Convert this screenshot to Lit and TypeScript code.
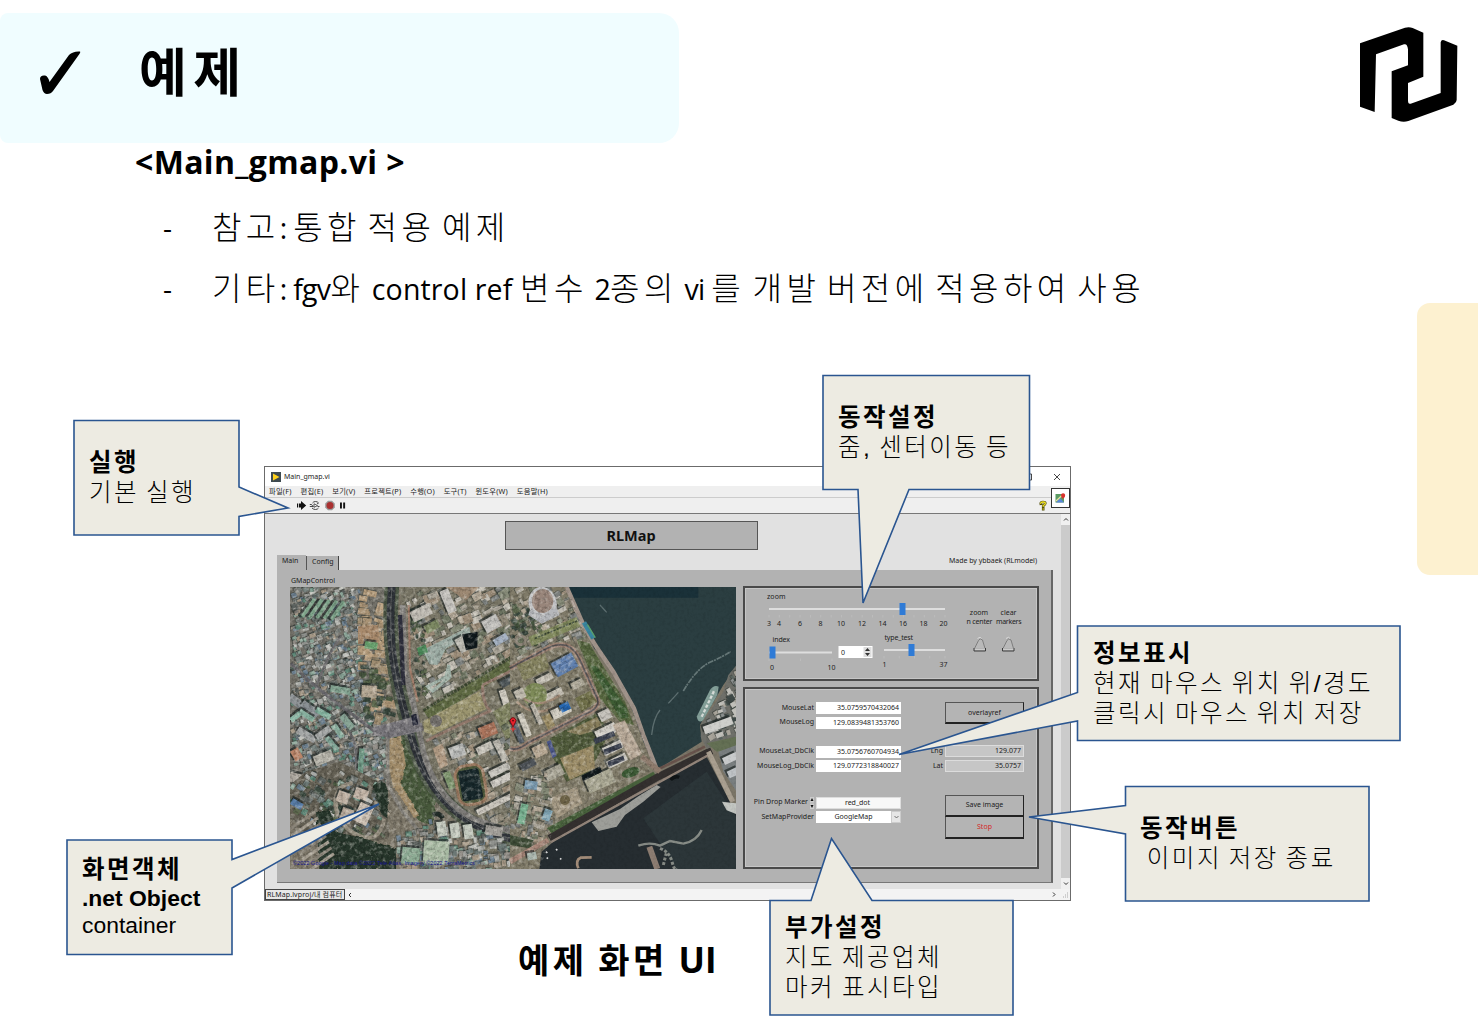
import { LitElement, html, svg, css } from "lit";
import { customElement } from "lit/decorators.js";

/* ---------- deterministic scatter used by the aerial map ---------- */
function rng(seed: number) {
  let s = seed;
  return () => {
    s = (s * 1664525 + 1013904223) % 4294967296;
    return s / 4294967296;
  };
}

type Pt = [number, number];

function inside(p: Pt, poly: Pt[]) {
  let hit = false;
  for (let i = 0, j = poly.length - 1; i < poly.length; j = i++) {
    const [xi, yi] = poly[i];
    const [xj, yj] = poly[j];
    if (yi > p[1] !== yj > p[1] && p[0] < ((xj - xi) * (p[1] - yi)) / (yj - yi) + xi) hit = !hit;
  }
  return hit;
}

function scatter(seed: number, poly: Pt[], count: number, min: number, max: number, angle: number, colors: string[]) {
  const r = rng(seed);
  const xs = poly.map((p) => p[0]);
  const ys = poly.map((p) => p[1]);
  const x0 = Math.min(...xs), x1 = Math.max(...xs), y0 = Math.min(...ys), y1 = Math.max(...ys);
  const out = [];
  for (let i = 0; i < count; i++) {
    const x = x0 + r() * (x1 - x0);
    const y = y0 + r() * (y1 - y0);
    const w = min + r() * (max - min);
    const h = min + r() * (max - min) * 0.7;
    const a = angle + (r() - 0.5) * 16;
    const c = colors[Math.floor(r() * colors.length)];
    if (!inside([x, y], poly)) continue;
    out.push(svg`<g transform="translate(${x.toFixed(1)} ${y.toFixed(1)}) rotate(${a.toFixed(0)})"><rect x="-2" y="-3" width=${w.toFixed(1)} height=${h.toFixed(1)} fill="#2c332f" opacity=".5"></rect><rect width=${w.toFixed(1)} height=${h.toFixed(1)} fill=${c}></rect></g>`);
  }
  return out;
}

const HOUSES = ["#8f918d", "#a7a9a5", "#7a807d", "#8aa497", "#6c7875", "#a39684", "#bfc0bb", "#6d8090", "#8f8b85", "#5f8878", "#5b615e"];
const CAMPUS = ["#a9a498", "#c2beb4", "#8f8878", "#858a77", "#9c8d79", "#7c807e", "#b3a897", "#6c7360"];
const TREES = ["#46553f", "#505f45", "#3f4d43", "#5f6b50", "#37453b"];
const SAND = ["#b39b7b", "#a89274", "#bda586", "#a08e72"];

const slab = (x: number, y: number, w: number, h: number, a: number, c: string) =>
  svg`<g transform="translate(${x} ${y}) rotate(${a})"><rect x="-5" y="-7" width=${w} height=${h} fill="#1f2625" opacity=".7"></rect><rect width=${w} height=${h} fill=${c}></rect></g>`;

@customElement("aerial-map")
class AerialMap extends LitElement {
  static styles = css`
    :host { display: block; width: 446px; height: 282px; }
    .pic { display: block; width: 446px; height: 282px; }
    .credit { font: 5.4px "Liberation Sans", sans-serif; fill: #14148c; }
  `;
  render() {
    return html`<svg class="pic" viewBox="290 586 446 282">
      <defs>
        <filter id="grain" x="0" y="0" width="1" height="1">
          <feTurbulence type="fractalNoise" baseFrequency="0.32" numOctaves="3" seed="4"></feTurbulence>
          <feColorMatrix values="0 0 0 0 0  0 0 0 0 0  0 0 0 0 0  2.6 0 0 0 -1.15"></feColorMatrix>
        </filter>
        <filter id="glow" x="0" y="0" width="1" height="1">
          <feTurbulence type="fractalNoise" baseFrequency="0.22" numOctaves="3" seed="11"></feTurbulence>
          <feColorMatrix values="0 0 0 0 1  0 0 0 0 .97  0 0 0 0 .9  0 2.4 0 0 -1.15"></feColorMatrix>
        </filter>
        <filter id="rough" x="-.1" y="-.1" width="1.2" height="1.2">
          <feTurbulence type="fractalNoise" baseFrequency="0.06" numOctaves="3" seed="2"></feTurbulence>
          <feDisplacementMap in="SourceGraphic" scale="9" xChannelSelector="R" yChannelSelector="G"></feDisplacementMap>
        </filter>
      </defs>
      <rect x="290" y="586" width="446" height="282" fill="#7c7668"></rect>

      <g transform="translate(286 584) scale(.33333)">
        <path d="M12 6H300V600H12Z" fill="#737169"></path>
        ${scatter(7, [[12, 6], [215, 6], [215, 210], [225, 330], [290, 410], [300, 590], [200, 600], [12, 560]], 1150, 7, 20, -22, HOUSES)}
        ${scatter(21, [[215, 6], [290, 6], [305, 380], [260, 400], [215, 230]], 70, 10, 40, 8, SAND)}
        ${scatter(22, [[215, 240], [300, 240], [310, 400], [240, 390]], 40, 10, 26, 8, TREES)}
        <path d="M216 122l60-2 6 52-66 6Z" fill="#a88a6c"></path>
        ${slab(238, 168, 38, 22, 8, "#66a06c")}
        ${slab(228, 300, 46, 36, 4, "#b4a793")}
        ${[0, 1, 2, 3, 4].map((i) => slab(44 + i * 22, 92 + i * 2, 66, 11, -55, "#7fa58b"))}
        <path d="M14 235L60 280 140 345 215 400 275 445" fill="none" stroke="#67666a" stroke-width="10"></path>
        <path d="M165 150L130 210 92 300M190 440q30 50 18 130" fill="none" stroke="#6d6c6e" stroke-width="8"></path>
        ${slab(18, 325, 60, 24, 38, "#8d9295")}
        ${slab(55, 345, 60, 24, 36, "#898f93")}
        ${slab(10, 400, 50, 16, -38, "#8bb7a5")}
        ${slab(45, 372, 50, 16, 32, "#84ad9c")}
        ${slab(40, 425, 62, 22, 30, "#a2a5a5")}
        ${slab(86, 450, 50, 20, -36, "#a6a9a8")}
        ${slab(95, 365, 48, 18, 30, "#7fae9b")}
        ${slab(135, 300, 60, 20, 10, "#7fa08e")}
        ${slab(150, 415, 46, 16, 55, "#8cb0a0")}
        ${slab(128, 452, 50, 16, 50, "#7fa596")}
        ${slab(80, 515, 58, 32, -22, "#b5b3a9")}
        ${slab(175, 385, 50, 20, 50, "#89a596")}
        ${slab(220, 490, 16, 80, 4, "#6f9a86")}
        ${slab(14, 560, 40, 30, 15, "#aaa59d")}
        ${slab(12, 500, 26, 34, -30, "#b98468")}
        <path d="M60 560L160 530 300 600 310 760 120 800 12 700V600Z" fill="#635f53"></path>
        ${scatter(31, [[60, 560], [150, 540], [300, 600], [300, 740], [120, 760], [12, 690], [12, 600]], 150, 8, 24, 30, [...TREES, ...HOUSES])}
        <path d="M148 650Q150 600 200 595M148 650Q150 720 215 750T295 700" fill="none" stroke="#958e7f" stroke-width="12"></path>
        ${slab(160, 615, 36, 34, 20, "#bcaea0")}
        ${slab(212, 605, 40, 34, 20, "#c1b3a5")}
        ${slab(172, 665, 36, 44, 20, "#b8aa9c")}
        ${slab(225, 650, 44, 60, 25, "#cbbfb2")}
        ${slab(22, 640, 36, 20, 30, "#587ca6")}
        <g filter="url(#rough)">
          <path d="M262 600Q300 580 306 610L304 700Q280 690 275 650Z" fill="#26362b"></path>
          <path d="M90 680L130 670 150 740 250 765 330 790V852H100Z" fill="#273629"></path>
        </g>
        ${[0, 1, 2, 3, 4, 5, 6, 7].map((i) => svg`<path d="M${8 + i * 8} ${735 + i * 18}L${88 + i * 8} ${680 + i * 18}" stroke=${i % 2 ? "#a29b8e" : "#8a8478"} stroke-width="9"></path>`)}

        <path d="M340 0L370 6 690 0V900H640L430 560 390 410Z" fill="#787565"></path>
        ${scatter(41, [[350, 6], [690, 6], [690, 200], [430, 340], [385, 320]], 250, 10, 36, -28, CAMPUS)}
        ${scatter(42, [[370, 60], [400, 60], [430, 340], [390, 330]], 60, 6, 16, 10, TREES)}
        ${slab(370, 82, 62, 34, -26, "#bdb9b1")}
        ${slab(460, 20, 28, 72, -22, "#c4c2bd")}
        <path d="M480 6H580L540 46Z" fill="#9c8872"></path>
        ${slab(412, 124, 46, 26, -28, "#7d8a63")}
        ${slab(585, 110, 50, 40, -28, "#c1c0bd")}
        ${slab(620, 165, 44, 22, -30, "#a6b3c4")}
        <path d="M410 195L500 150 550 125 555 150 480 190 455 240 430 238Z" fill="#9dada5"></path>
        <path d="M392 190l26-12 8 24-26 10Z" fill="#4c8a5a"></path>
        ${slab(505, 165, 30, 46, -28, "#b8b7af")}
        <path d="M528 148L575 140 574 188 540 196Z" fill="#10191c"></path>
        <path d="M425 305L480 275 488 240 492 276 440 318Z" stroke="#a3b4aa" stroke-width="9" fill="none"></path>
        <path d="M412 378L690 212V250L430 402Z" fill="#5f6a43"></path>
        <path d="M412 376L690 208" stroke="#3f4a33" stroke-width="9" stroke-dasharray="9 3"></path>
        <path d="M412 408L580 318 600 372 440 450 414 440Z" fill="#9a946e"></path>
        <circle cx="450" cy="408" r="18" fill="#6d6a66"></circle>
        <path d="M590 300L690 250M590 300Q588 350 612 378L520 420 420 468" fill="none" stroke="#90776a" stroke-width="9"></path>
        ${slab(640, 290, 50, 22, -28, "#4f575a")}
        ${slab(638, 318, 20, 52, -18, "#cfcbc0")}
        <path d="M620 380L690 340V460L660 460Z" fill="#7f8360"></path>

        ${scatter(51, [[430, 470], [640, 390], [690, 500], [690, 780], [640, 740], [520, 640]], 200, 10, 30, -26, CAMPUS)}
        <path d="M440 490L470 475 486 540 462 552Z" fill="#b09a83"></path>
        ${slab(486, 490, 46, 36, -20, "#b8bab8")}
        ${slab(575, 430, 52, 36, -22, "#ab745c")}
        ${slab(568, 490, 66, 24, -26, "#c6c3ba")}
        ${slab(620, 470, 20, 70, -26, "#bfbcb3")}
        ${slab(606, 560, 66, 22, -26, "#c5c3bc")}
        ${slab(612, 590, 72, 22, -26, "#cbc8c1")}
        ${slab(570, 675, 130, 18, -26, "#c8c4bb")}
        ${slab(470, 565, 22, 54, -22, "#7c946c")}
        <g transform="rotate(-10 556 600)">
          <rect x="508" y="536" width="94" height="126" rx="34" fill="#9c7b62"></rect>
          <rect x="517" y="545" width="76" height="108" rx="24" fill="#4f5a3c"></rect>
          <rect x="523" y="553" width="62" height="92" rx="8" fill="#17272a"></rect>
        </g>

        <g filter="url(#rough)">
          <path d="M312 450L350 440 410 560 450 640 440 720 400 710 330 600 306 530Z" fill="#46583a"></path>
          <path d="M310 460L345 452 360 540 345 600 400 690 385 700 320 600 306 530Z" fill="#a18c6b"></path>
        </g>
        <path d="M305 440V600L350 680 400 740" fill="none" stroke="#85827b" stroke-width="11"></path>
        <path d="M318 0Q306 150 328 260T372 440Q410 590 500 670T700 765" fill="none" stroke="#4d5847" stroke-width="44"></path>
        <path d="M318 0Q306 150 328 260T372 440Q410 590 500 670T700 765" fill="none" stroke="#30343a" stroke-width="23"></path>
        <path d="M318 0Q306 150 328 260T372 440Q410 590 500 670T700 765" fill="none" stroke="#5d6061" stroke-width="3"></path>
        <path d="M350 60L356 250 385 370 412 500Q450 640 560 700L690 745" fill="none" stroke="#7d7b78" stroke-width="17"></path>
        <path d="M342 90L352 300" stroke="#2e2f3c" stroke-width="13"></path>
        <path d="M368 60L372 250 395 350" stroke="#a07c6a" stroke-width="6" fill="none"></path>
        <path d="M262 440L400 402M300 450L410 425M262 440L310 445" stroke="#77757a" stroke-width="24" fill="none"></path>
        <path d="M375 390l16-4 6 32-16 4Z" fill="#1f2233"></path>
        ${scatter(61, [[330, 750], [420, 700], [600, 740], [690, 790], [690, 852], [330, 852]], 240, 9, 26, -8, HOUSES)}
        ${[0, 1, 2].map((i) => slab(450 + i * 40, 712 + i * 4, 28, 44, -8, "#c3c9be"))}
        ${slab(415, 765, 76, 70, 4, "#a9bba4")}
        ${slab(350, 785, 54, 50, 6, "#8dab94")}
        ${slab(600, 720, 52, 28, 8, "#a19e98")}
        <path d="M440 690q20-10 30 10" stroke="#222c28" stroke-width="14" fill="none"></path>
      </g>

      <g transform="translate(510 584) scale(.33333)">
        <path d="M0 6H170L250 190 370 380 440 550 120 770 90 800V852H0Z" fill="#7f7a68"></path>
        ${scatter(71, [[0, 6], [165, 6], [220, 150], [90, 190], [0, 240]], 120, 8, 30, -26, CAMPUS)}
        ${scatter(72, [[0, 60], [50, 60], [100, 150], [60, 180], [0, 190]], 50, 8, 18, -26, TREES)}
        <ellipse cx="98" cy="55" rx="42" ry="50" transform="rotate(-14 98 55)" fill="#c4c5c7"></ellipse>
        <ellipse cx="98" cy="48" rx="32" ry="36" fill="#98857a"></ellipse>
        <path d="M55 90l40 26 54-26-10-24-46 24-34-14Z" fill="#b5b7bb"></path>
        <circle cx="32" cy="166" r="18" fill="#8e8679"></circle><circle cx="32" cy="166" r="9" fill="#68705a"></circle>
        <path d="M60 170L205 110" stroke="#818a5d" stroke-width="30"></path>
        <path d="M75 160L205 106" stroke="#3d4a35" stroke-width="5" stroke-dasharray="7 3"></path>
        <path d="M0 250L100 196Q180 150 212 230L262 340Q270 370 230 385L60 470Q20 500 0 490" fill="none" stroke="#9b8273" stroke-width="15"></path>
        <path d="M0 250L100 196Q180 150 212 230L262 340Q270 370 230 385L60 470Q20 500 0 490" fill="none" stroke="#5a5658" stroke-width="5"></path>
        <path d="M200 165L238 175 290 260 345 350 372 420 330 410 270 340 232 240Z" fill="#56663f"></path>
        <path d="M240 240L262 245 350 370 355 400 330 400Z" fill="#3d5c33"></path>
        <path d="M20 240L105 205 118 250 40 288Z" fill="#84825f"></path>
        ${slab(122, 236, 70, 46, -28, "#5f7fae")}
        <path d="M122 236l62-33M128 246l62-33M133 256l62-33" stroke="#86a0c6" stroke-width="2"></path>
        ${slab(76, 284, 52, 20, -26, "#c0bbb0")}
        ${slab(98, 332, 60, 24, -26, "#c2bdb1")}
        <circle cx="75" cy="330" r="36" fill="#7d8a58"></circle>
        <path d="M30 330Q80 380 150 330M20 350Q80 410 160 350" stroke="#a48d78" stroke-width="7" fill="none"></path>
        ${slab(120, 378, 60, 30, -26, "#cfcbbf")}
        ${slab(146, 362, 30, 24, -26, "#2566b0")}
        ${slab(180, 296, 40, 22, -26, "#b0ab9b")}
        <path d="M195 340L240 318 262 350 215 380Z" fill="#6f6f49"></path>
        ${slab(22, 390, 18, 72, -22, "#d0ccc0")}
        ${slab(60, 360, 14, 66, -24, "#beb9ad")}
        ${slab(2, 410, 16, 72, -22, "#5b646e")}
        ${slab(10, 320, 30, 30, -26, "#bcb7aa")}
        <path d="M95 395l24-10 16 36-20 14Z" fill="#9a8b63"></path>

        <path d="M120 460L260 385 300 440 240 560 170 590 130 520Z" fill="#4f5a3a"></path>
        <path d="M170 440L262 395 280 430 210 450Z" fill="#877d5b"></path>
        <path d="M150 520L250 480 255 550 180 585Z" fill="#9a8b66"></path>
        ${slab(252, 440, 66, 30, -26, "#d0cdc6")}
        ${slab(276, 490, 62, 26, -26, "#cbc8c1")}
        ${slab(288, 530, 62, 24, -26, "#cbc8c1")}
        <path d="M308 420l36-14 52 100-34 20Z" fill="#b9aa99"></path>
        <path d="M250 462l60-24 6 14-60 26ZM280 494l52-20 4 14-52 22ZM292 530l48-18 4 14-48 20Z" fill="#3c4250"></path>
        ${slab(262, 385, 36, 30, -26, "#c6c3bc")}
        <ellipse cx="362" cy="562" rx="28" ry="14" transform="rotate(-18 362 562)" fill="#3c5a35"></ellipse>
        <path d="M110 470l12-6 18 48-12 8Z" fill="#4b5688"></path>
        ${slab(222, 585, 86, 44, -24, "#aaa894")}
        <path d="M214 572l56-28 6 16-56 28Z" fill="#121a1d"></path>
        <path d="M120 640L200 605 218 655 140 700Z" fill="#a59a85"></path>
        <circle cx="165" cy="645" r="15" fill="#6c6246"></circle>
        ${slab(28, 540, 48, 22, -26, "#50555a")}
        ${slab(64, 490, 40, 34, -26, "#b7a893")}
        ${slab(100, 560, 56, 34, -26, "#a8a596")}
        ${scatter(81, [[0, 570], [110, 560], [120, 740], [60, 790], [0, 740]], 90, 10, 28, 12, CAMPUS)}
        ${slab(46, 585, 38, 26, 8, "#7d9db2")}
        ${slab(34, 655, 22, 60, 12, "#76b08f")}
        ${slab(106, 670, 24, 34, 20, "#7fa4b4")}
        <path d="M0 750L70 765 60 790 0 780Z" fill="#3e4c37"></path>
        <path d="M0 830L115 765" stroke="#a8887a" stroke-width="16"></path>
        ${slab(50, 805, 28, 22, -10, "#a9b6ae")}

        <path d="M172 6H680V245L640 300 570 420 575 470 440 555 400 470 365 370 300 240 252 190 228 130Z" fill="#2b3e41"></path>
        <path d="M172 6H565V38H185Z" fill="#1a3139"></path>
        <path d="M170 6L225 130 262 190 310 260 372 370 400 450 440 552" fill="none" stroke="#a0938a" stroke-width="13"></path>
        <path d="M222 112L250 160" stroke="#3a86a0" stroke-width="14"></path>
        <path d="M232 118L256 158" stroke="#5ba06b" stroke-width="4"></path>
        <path d="M95 800L130 770 440 592 590 515 680 690V852H88Z" fill="#262d31"></path>
        <path d="M400 700Q480 640 590 560L680 700V852H500Z" fill="#2f3b3d" opacity=".7"></path>
        <path d="M110 730L430 560 440 575 125 745Z" fill="#48613c"></path>
        <path d="M118 760L445 575 605 497" fill="none" stroke="#34302f" stroke-width="22"></path>
        <path d="M122 772L450 590 600 508" fill="none" stroke="#93857a" stroke-width="7"></path>
        <path d="M440 555L585 485" fill="none" stroke="#69544d" stroke-width="8"></path>
        <path d="M395 515L450 560" stroke="#8f7c6e" stroke-width="16"></path>
        <path d="M245 712L330 672 385 634 440 600 452 606 400 650 345 690 320 725 265 738Z" fill="#b3b3ac" opacity=".85"></path>
        <g fill="none" stroke="#a7aaa2" opacity=".75">
          <path d="M385 782Q420 770 450 782L480 768 520 776Q560 768 575 735" stroke-width="7"></path>
          <path d="M450 790Q478 800 486 830T500 850M460 840l10-40" stroke-width="9" stroke-dasharray="9 5"></path>
        </g>
        <path d="M636 650L680 655V688L650 676Z" fill="#c3c6c2"></path>
        <path d="M520 318Q560 250 600 232T662 200" fill="none" stroke="#8fa09f" stroke-width="5" stroke-dasharray="17 2 6 3" opacity=".6"></path>
        <path d="M425 450Q430 400 450 375M475 355L505 322M270 60l20 22" fill="none" stroke="#8fa09f" stroke-width="4" opacity=".5"></path>
        <path d="M680 240L655 270 640 320 575 415 572 455 590 492 680 458Z" fill="#6f706a"></path>
        ${scatter(91, [[680, 245], [655, 275], [640, 330], [580, 420], [575, 460], [680, 450]], 130, 8, 26, -26, ["#c1c0ba", "#8b8f8e", "#5b6560", "#a8a49a", "#3f4947"])}
        ${slab(578, 425, 90, 24, -20, "#cfcfcb")}
        <path d="M560 395L600 315Q612 298 626 305L622 330 580 405Q566 418 560 395Z" fill="#84a099"></path>
        <path d="M575 395L612 318" stroke="#d6dcd8" stroke-width="7" stroke-dasharray="10 5"></path>
        <path d="M590 475L680 455V490L620 500Z" fill="#647054"></path>
        <path d="M625 500L680 480V620L640 560Z" fill="#7a7f80"></path>
        ${slab(636, 520, 46, 22, -25, "#c9cbcc")}
        ${slab(650, 560, 36, 22, -25, "#bfc3c6")}
        <path d="M595 500L668 650" stroke="#aaa091" stroke-width="15"></path>
        <path d="M418 785L442 852" stroke="#8d7d72" stroke-width="18"></path>
        <path d="M245 817L212 818Q195 825 205 850" fill="none" stroke="#a28c79" stroke-width="8"></path>
        <path d="M108 800l4 4M138 792l4 4M150 820l4 3M110 818l4 3" stroke="#ddd" stroke-width="5"></path>
        <path d="M482 585q12-14 26-8" stroke="#0f1416" stroke-width="10" fill="none"></path>
      </g>

      <clipPath id="land"><path d="M290 586H567L593 648 634 712 655 768 552 832 540 868H290Z"></path></clipPath>
      <rect x="290" y="586" width="446" height="282" filter="url(#grain)" opacity=".08"></rect>
      <g clip-path="url(#land)">
        <rect x="290" y="586" width="446" height="282" filter="url(#grain)" opacity=".18"></rect>
        <rect x="290" y="586" width="446" height="282" filter="url(#glow)" opacity=".4"></rect>
      </g>

      <path d="M513 726L510.600 721.500A3 3 0 1 1 515.400 721.500Z" fill="#e8202c" stroke="#58060b" stroke-width=".8"></path>
      <circle cx="513" cy="719.600" r=".9" fill="#58060b"></circle>
      <path d="M510.500 728h5M513 725.500v5" stroke="#ff2b2b" stroke-width=".9"></path>
      <text class="credit" x="293" y="864" textLength="182">©2022 Google - Map data ©2022 Tele Atlas, Imagery ©2022 TerraMetrics</text>
    </svg>`;
  }
}

/* ---------- front panel window ---------- */
@customElement("panel-window")
class PanelWindow extends LitElement {
  static styles = css`
    :host { display: block; }
    * { box-sizing: border-box; }
    .win { width: 807px; height: 435px; display: flex; flex-direction: column; background: #e1e1e1; border: 1px solid #6b6b6b;
      font: 7px/10px "Noto Sans", "Noto Sans CJK KR", sans-serif; color: #1c1c1c; }
    .title { height: 19px; flex: none; background: #fff; display: flex; align-items: center; padding: 0 9px 0 6px; }
    .title .name { margin-left: 3px; flex: 1; font-size: 7px; }
    .ic { display: block; flex: none; }
    .bars { display: flex; height: 28px; flex: none; background: #efefef; border-bottom: 1px solid #777; }
    .stack { flex: 1; display: flex; flex-direction: column; }
    .menu { height: 12px; display: flex; align-items: center; gap: 8.9px; padding: 0 0 1px 4px; border-bottom: 1px solid #ccc; font-size: 7.300px; letter-spacing: .200px; white-space: nowrap; }
    .tools { flex: 1; display: flex; align-items: center; padding: 0 4px 0 32px; }
    .vi { width: 19px; height: 20px; margin-top: 2px; border: 1px solid #333; background: #fff; display: flex; align-items: center; justify-content: center; }
    .mid { flex: 1; display: flex; min-height: 0; }
    .body { flex: 1; display: flex; flex-direction: column; padding: 7px 8px 0 12px; }
    .head { align-self: center; width: 253px; height: 29px; margin-left: -68px; border: 1px solid #555; background: #b2b2b2; display: flex; align-items: center; justify-content: center; font: bold 14.500px/18px "Noto Sans", sans-serif; color: #111; padding-bottom: 2px; }
    .tabrow { display: flex; height: 20px; align-items: flex-end; padding-top: 4px; }
    .tab { height: 14px; padding: 1px 5px 0; background: #b2b2b2; }
    .tab.first { width: 29px; height: 15px; }
    .tab.second { width: 33px; border-right: 1px solid #444; border-left: 1px solid #555; padding-left: 5px; }
    .made { margin-left: auto; padding: 0 16px 3px 0; align-self: center; letter-spacing: -.02px; }
    .page { width: 776px; height: 313px; background: #b2b2b2; border-right: 2px solid #666; border-bottom: 1px solid #777; padding: 5px 12px 0 13px; display: flex; }
    .mapcol { width: 446px; }
    .lbl { height: 12px; padding-left: 1px; line-height: 12px; }
    .side { margin-left: 7px; padding-top: 11px; display: flex; flex-direction: column; gap: 6px; }
    .box { width: 296px; border: 2px solid #4a4a4a; outline: 1px solid #c6c6c6; outline-offset: -3px; }
    .one { height: 95px; }
    .two { height: 182px; display: flex; padding: 13px 13px 0 0; }
    .gauge { display: block; }
    .gauge text { font: 7px "Noto Sans", sans-serif; fill: #222; }
    .form { width: 156px; display: flex; flex-direction: column; }
    .row { display: flex; height: 12px; margin-bottom: 2.700px; align-items: center; justify-content: flex-end; gap: 2px; white-space: nowrap; line-height: 9px; }
    .row .k { padding-bottom: 2px; }
    .row.gap { margin-top: 14.200px; }
    .row.gap2 { margin-top: 21.600px; }
    .field { width: 85px; height: 12px; background: #fff; text-align: right; padding-right: 2px; line-height: 12px; font-size: 7px; }
    .field.mid2 { text-align: center; background: #f8f8f8; border: 1px solid #ddd; line-height: 10px; }
    .field.combo { display: flex; padding: 0; text-align: center; }
    .combo .val { flex: 1; }
    .combo .dd { width: 10px; background: #e6e6e6; border: 1px solid #ccc; display: flex; align-items: center; justify-content: center; }
    .acts { margin-left: auto; width: 94px; display: flex; flex-direction: column; align-items: flex-end; }
    .btn { width: 79px; height: 22px; background: #b4b4b4; border: 1px solid #555; border-right: 1.500px solid #222; border-bottom: 2px solid #222; display: flex; align-items: center; justify-content: center; font-size: 7px; }
    .btn.stop { color: #d42828; border-top: 0; }
    .ro { display: flex; gap: 2px; height: 12px; margin-bottom: 2.700px; align-items: center; }
    .ro .f { width: 79px; height: 12px; background: #c6c6c6; border: 1px solid #dcdcdc; text-align: right; line-height: 10px; padding-right: 2px; }
    .ro.a { margin-top: 21px; }
    .btn.save { margin-top: 20.600px; }
    .vs { width: 10px; background: #cbcbcb; display: flex; flex-direction: column; justify-content: space-between; }
    .cap { height: 11px; background: #f0f0f0; display: flex; align-items: center; justify-content: center; }
    .hs { height: 11px; flex: none; display: flex; align-items: center; background: #f3f3f3; }
    .proj { height: 11px; width: 80px; border: 1px solid #444; background: #e8e8e8; padding-left: 1px; line-height: 9px; white-space: nowrap; font-size: 7px; letter-spacing: .12px; }
    .spacer { flex: 1; }
  `;

  private slider(x: number, y: number, w: number, thumb: number, ticks: number) {
    return svg`<path d="M${x} ${y}h${w}" stroke="#dedede" stroke-width="2"></path>
      ${Array.from({ length: ticks + 1 }, (_, i) => svg`<path d="M${x + (w * i) / ticks} ${y + 6}v2.500" stroke="#c2c2c2" stroke-width=".6"></path>`)}
      <rect x=${thumb - 3} y=${y - 6} width="6" height="12" fill="#2f7bd6"></rect>`;
  }

  private knob(x: number) {
    return svg`<path d="M${x - 5.5} 648.500L${x - 1.5} 640.500Q${x} 637.500 ${x + 2.5} 640L${x + 5} 648.500Z" fill="#b9b9b9" stroke="#777" stroke-width=".9"></path>
      <path d="M${x - 2.5} 638.500q3-2.500 4 0" fill="none" stroke="#e2e2e2" stroke-width=".8"></path>
      <path d="M${x - 5.5} 649h11" stroke="#e6e6e6" stroke-width="1"></path>
      <path d="M${x - 6} 648v3h11.500v-3" fill="none" stroke="#3c3c3c" stroke-width="1"></path>`;
  }

  render() {
    const scale = [[769, "3"], [779, "4"], [800, "6"], [820.5, "8"], [841, "10"], [862, "12"], [882.5, "14"], [903, "16"], [923.5, "18"], [943.5, "20"]] as [number, string][];
    const menu = ["파일(F)", "편집(E)", "보기(V)", "프로젝트(P)", "수행(O)", "도구(T)", "윈도우(W)", "도움말(H)"];
    return html`<div class="win">
      <div class="title">
        <svg class="ic" width="10" height="10" viewBox="0 0 10 10"><rect width="10" height="10" fill="#3e4a50"></rect><path d="M2 1.500L8.500 5 2 8.500Z" fill="#ffd21c"></path></svg>
        <span class="name">Main_gmap.vi</span>
        <svg class="ic" width="34" height="8" viewBox="0 0 34 8"><path d="M-1.500 1h6v6h-6ZM27 1l6 6M33 1l-6 6" fill="none" stroke="#333" stroke-width=".9"></path></svg>
      </div>
      <div class="bars">
        <div class="stack">
          <div class="menu">${menu.map((m) => html`<span>${m}</span>`)}</div>
          <div class="tools">
            <svg class="ic" width="50" height="11" viewBox="0 0 50 11">
              <path d="M0 3.500h1.200v4H0ZM2 3.500h2V1L9.200 5.500 4 10V7.500H2Z" fill="#111"></path>
              <path d="M12.800 4.500h2M12.800 6.500h3.500l-1.500-1.500M22.500 6.500h-2M15.500 3q1-1.500 3-1.500t3 1.500l-1.500 1M21.500 8q-1 1.500-3 1.500T15 8" fill="none" stroke="#333" stroke-width=".9"></path>
              <path d="M17 3.800l3.500 1.800L17 7.300Z" fill="#fff" stroke="#333" stroke-width=".8"></path>
              <path d="M31 .7h4l2.800 2.800v4L35 10.300h-4L28.200 7.500v-4Z" fill="#999"></path><circle cx="33" cy="5.500" r="3.500" fill="#a93030"></circle>
              <path d="M43 2.500h1.900v6H43ZM46.200 2.500h1.900v6h-1.900Z" fill="#111"></path>
            </svg>
            <span class="spacer"></span>
            <svg class="ic" width="8" height="11" viewBox="0 0 8 11"><path d="M1.800 3.800Q1.500 2 4 2T6.300 3.600Q6.300 4.800 4.200 5.500V6.500M4.200 8.800v.4" fill="none" stroke="#55500a" stroke-width="2.600" stroke-linecap="square"></path><path d="M1.800 3.800Q1.500 2 4 2T6.300 3.600Q6.300 4.800 4.200 5.500V6.800M4.200 8.500v1" fill="none" stroke="#f3e62a" stroke-width="1.300"></path></svg>
          </div>
        </div>
        <div class="vi"><svg width="11" height="10" viewBox="0 0 11 10"><rect x=".5" y="1" width="8.500" height="8.500" fill="#5b9b63"></rect><path d="M1 9.500L5 5l4 4.500Z" fill="#5a86d8"></path><path d="M1 8L8 1.500" stroke="#e8e3a0" stroke-width="1.300"></path><path d="M7.800 6Q5.800 3.500 6 2T8 .3 10.200 2 7.800 6Z" fill="#d8322c"></path></svg></div>
      </div>
      <div class="mid">
        <div class="body">
          <div class="head">RLMap</div>
          <div class="tabrow"><span class="tab first">Main</span><span class="tab second">Config</span><span class="made">Made by ybbaek (RLmodel)</span></div>
          <div class="page">
            <div class="mapcol"><div class="lbl">GMapControl</div><aerial-map></aerial-map></div>
            <div class="side">
              <div class="box one">
                <svg class="gauge" width="292" height="90" viewBox="745 588 292 90">
                  <text x="767" y="599" textLength="18.500">zoom</text>
                  ${this.slider(769, 609, 176, 902.5, 17)}
                  ${scale.map(([x, n]) => svg`<text x=${x} y="626" text-anchor="middle">${n}</text>`)}
                  <text x="772.500" y="641.500" textLength="17.500">index</text>
                  ${this.slider(769, 652.5, 63, 772.5, 2)}
                  <text x="772" y="669.500" text-anchor="middle">0</text><text x="831.500" y="669.500" text-anchor="middle">10</text>
                  <rect x="838.500" y="646" width="34" height="12" fill="#fff"></rect><text x="841" y="655">0</text>
                  <rect x="863.500" y="647" width="8" height="10" fill="#ddd"></rect><path d="M867.500 648l2.500 3h-5ZM867.500 656l2.500-3h-5Z" fill="#333"></path>
                  <text x="884.500" y="639.500" textLength="28.500">type_test</text>
                  ${this.slider(884, 650, 61, 911.5, 4)}
                  <text x="884.500" y="667" text-anchor="middle">1</text><text x="943.500" y="667" text-anchor="middle">37</text>
                  <text x="979" y="615" text-anchor="middle">zoom</text><text x="1008.500" y="615" text-anchor="middle">clear</text>
                  <text x="966.500" y="624" textLength="26">n center</text><text x="996" y="624" textLength="25.500">markers</text>
                  ${this.knob(980)}${this.knob(1008.5)}
                </svg>
              </div>
              <div class="box two">
                <div class="form">
                  <div class="row"><span class="k">MouseLat</span><span class="field">35.0759570432064</span></div>
                  <div class="row"><span class="k">MouseLog</span><span class="field">129.0839481353760</span></div>
                  <div class="row gap"><span class="k">MouseLat_DbClk</span><span class="field">35.0756760704934</span></div>
                  <div class="row"><span class="k">MouseLog_DbClk</span><span class="field">129.0772318840027</span></div>
                  <div class="row gap2"><span class="k">Pin Drop Marker</span><svg class="ic" width="4" height="12" viewBox="0 0 4 12"><path d="M0 0h4v5.500H0ZM0 6.500h4V12H0Z" fill="#ccc"></path><path d="M2 1l1.500 3h-3ZM2 11l1.500-3h-3Z" fill="#111"></path></svg><span class="field mid2">red_dot</span></div>
                  <div class="row"><span class="k">SetMapProvider</span><span class="field combo"><span class="val">GoogleMap</span><span class="dd"><svg width="5" height="4" viewBox="0 0 5 4"><path d="M.5 1l2 2 2-2" fill="none" stroke="#555" stroke-width=".8"></path></svg></span></span></div>
                </div>
                <div class="acts">
                  <span class="btn">overlayref</span>
                  <div class="ro a">Lng<span class="f">129.077</span></div>
                  <div class="ro">Lat<span class="f">35.0757</span></div>
                  <span class="btn save">Save image</span>
                  <span class="btn stop">Stop</span>
                </div>
              </div>
            </div>
          </div>
        </div>
        <div class="vs">
          <span class="cap"><svg width="6" height="5" viewBox="0 0 6 5"><path d="M1 3.500l2-2 2 2" fill="none" stroke="#333"></path></svg></span>
          <span class="cap"><svg width="6" height="5" viewBox="0 0 6 5"><path d="M1 1.500l2 2 2-2" fill="none" stroke="#333"></path></svg></span>
        </div>
      </div>
      <div class="hs">
        <span class="proj">RLMap.lvproj/내 컴퓨터</span>
        <svg width="8" height="8" viewBox="0 0 8 8"><path d="M6 2L4 4l2 2" fill="none" stroke="#333"></path></svg>
        <span class="spacer"></span>
        <svg width="20" height="9" viewBox="0 0 20 9"><path d="M3 2.500l2 2-2 2" fill="none" stroke="#333"></path><path d="M17 3h1M15 5h1M17 5h1M13 7h1M15 7h1M17 7h1" stroke="#aaa"></path></svg>
      </div>
    </div>`;
  }
}

/* ---------- slide ---------- */
interface Note { cls: string; pts: string; head: string; lines: string[]; }

const NOTES: Note[] = [
  { cls: "n1", pts: "74,420.500 239,420.500 239,487 288,508 239,516.500 239,535 74,535", head: "실행", lines: ["기본 실행"] },
  { cls: "n2", pts: "823,375.500 1029.500,375.500 1029.500,489.500 909,489.500 863,603 858,489.500 823,489.500", head: "동작설정", lines: ["줌, 센터이동 등"] },
  { cls: "n3", pts: "1077.500,626 1400,626 1400,740.500 1077.500,740.500 1077.500,721 899,754.500 1077.500,692.500", head: "정보표시", lines: ["현재 마우스 위치 위/경도", "클릭시 마우스 위치 저장"] },
  { cls: "n4", pts: "1125.500,786.500 1369,786.500 1369,901 1125.500,901 1125.500,834 1029,817 1125.500,805.500", head: "동작버튼", lines: ["\u00a0이미지 저장 종료"] },
  { cls: "n5", pts: "67,840 232,840 232,859.500 379,804 232,888 232,954.500 67,954.500", head: "화면객체", lines: [] },
  { cls: "n6", pts: "770,900.500 811,900.500 831.500,838.500 872,900.500 1013,900.500 1013,1015 770,1015", head: "부가설정", lines: ["지도 제공업체", "마커 표시타입"] },
];

@customElement("app-root")
class AppRoot extends LitElement {
  static styles = css`
    :host { display: block; }
    * { box-sizing: border-box; }
    .slide { position: relative; width: 1478px; height: 1036px; overflow: hidden; background: #fff; color: #000; padding-top: 13px; display: flex; flex-direction: column; }
    .top { display: flex; justify-content: space-between; flex: none; height: 130px; }
    .band { width: 679px; height: 130px; border-radius: 8px 20px 20px 8px; background: #f0fdff; display: flex; align-items: center; padding: 0 0 10px 39px; }
    .check { display: block; margin-right: 58px; }
    h1 { margin: -6px 0 0; font: bold 52px/60px "Noto Sans CJK KR", sans-serif; letter-spacing: 6.500px; }
    .logo { display: block; margin: 13px 20px 0 0; }
    .file { margin: -2px 0 0 135px; height: 43px; font: bold 32px/42px "Open Sans", sans-serif; letter-spacing: .350px; flex: none; white-space: pre; }
    ul { list-style: none; margin: 12px 0 0 163px; padding: 0; height: 183px; flex: none; }
    li { height: 61px; display: flex; align-items: center; font: 300 32px/61px "Open Sans", "Noto Sans CJK KR", sans-serif; }
    .dash { width: 49px; font: 28px "Open Sans", sans-serif; }
    .ko { letter-spacing: 4.400px; font-family: "Noto Sans CJK KR", sans-serif; }
    .la { font: 28.500px/61px "Open Sans", sans-serif; white-space: pre; letter-spacing: .150px; }
    .gp { letter-spacing: -.700px; }
    .line { white-space: pre; }
    .shot { margin: 87px 0 0 264px; flex: none; height: 435px; }
    .caption { margin: 34px 0 0 518px; font: bold 34px/48px "Noto Sans CJK KR", sans-serif; white-space: pre; word-spacing: 3px; }
    .caption .ko { letter-spacing: 3.500px; }
    .caption .ui { font: bold 35px/48px "Open Sans", sans-serif; }
    .tab { position: absolute; right: 0; top: 303px; width: 61px; height: 272px; border-radius: 13px 0 0 13px; background: #fdf1d0; }
    .tails { position: absolute; inset: 0; }
    .note { position: absolute; display: flex; flex-direction: column; justify-content: center; padding: 0 0 0 15px; font: 300 24.500px/30px "Liberation Sans", "Noto Sans CJK KR", sans-serif; letter-spacing: 2.500px; word-spacing: -2.500px; white-space: pre; }
    .note b { font-weight: bold; }
    .note .lat { letter-spacing: 0; word-spacing: 0; line-height: 27px; font-size: 22.900px; font-weight: 400; }
    .note b.lat { font-weight: bold; }
    .n1 { left: 74px; top: 421px; width: 165px; height: 114px; }
    .n2 { left: 823px; top: 376px; width: 207px; height: 114px; }
    .n3 { left: 1078px; top: 627px; width: 322px; height: 114px; }
    .n4 { left: 1125px; top: 787px; width: 244px; height: 114px; }
    .n5 { left: 67px; top: 840px; width: 165px; height: 114px; }
    .n6 { left: 770px; top: 901px; width: 243px; height: 114px; }
  `;

  render() {
    return html`<div class="slide">
      <div class="top">
        <div class="band">
          <svg class="check" width="42" height="44" viewBox="0 0 42 44"><path d="M1 28Q1 24 6 24.500 9 25 10.500 31L30 4Q34 0 41 .5 42 1 39 5L14 40Q12 43 8 43 5 43 3.500 39Z"></path></svg>
          <h1>예제</h1>
        </div>
        <svg class="logo" width="98" height="97" viewBox="90 78 294 291"><path d="M90 130L225 83Q238 80 248 84L280 98V230L234 249V300Q234 314 242 311L332 279V127Q334 118 342 121L382 137L380 300Q380 308 370 314L235 363Q220 368 205 362L185 354V214L234 196V148Q232 130 222 133L138 163L134 336L90 320Z"></path></svg>
      </div>
      <p class="file">&lt;Main_gmap.vi &gt;</p>
      <ul>
        <li><span class="dash">-</span><span class="line"><span class="ko">참고</span><span class="la gp">: </span><span class="ko">통합</span><span class="la gp"> </span><span class="ko">적용</span><span class="la gp"> </span><span class="ko">예제</span></span></li>
        <li><span class="dash">-</span><span class="line"><span class="ko">기타</span><span class="la gp">: fgv</span><span class="ko">와</span><span class="la"> control ref </span><span class="ko">변수</span><span class="la gp"> 2</span><span class="ko">종의</span><span class="la gp"> vi </span><span class="ko">를</span><span class="la"> </span><span class="ko">개발</span><span class="la gp"> </span><span class="ko">버전에</span><span class="la gp"> </span><span class="ko">적용하여</span><span class="la gp"> </span><span class="ko">사용</span></span></li>
      </ul>
      <panel-window class="shot"></panel-window>
      <div class="caption"><span class="ko">예제</span> <span class="ko">화면</span> <span class="ui">UI</span></div>
      <div class="tab"></div>
      <svg class="tails" width="1478" height="1036" viewBox="0 0 1478 1036">
        ${NOTES.map((n) => svg`<polygon points=${n.pts} fill="#edebe2" stroke="#2a5590" stroke-width="1.600"></polygon>`)}
      </svg>
      ${NOTES.map((n) => html`<div class="note ${n.cls}"><b>${n.head}</b>${n.lines.map((l) => html`<span>${l}</span>`)}${n.cls === "n5" ? html`<b class="lat">.net Object</b><span class="lat">container</span>` : ""}</div>`)}
    </div>`;
  }
}
